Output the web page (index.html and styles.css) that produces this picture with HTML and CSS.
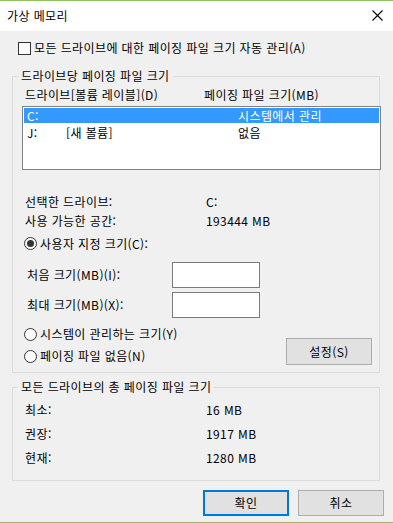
FILE: index.html
```html
<!DOCTYPE html>
<html lang="ko">
<head>
<meta charset="utf-8">
<title>가상 메모리</title>
<link rel="stylesheet" href="styles.css">
</head>
<body>
<div class="window">
  <div class="titlebar">
    <span class="title">가상 메모리</span>
    <svg class="close" width="11" height="11" viewBox="0 0 11 11"><path d="M0.5 0.5 L10.5 10.5 M10.5 0.5 L0.5 10.5" stroke="#000" stroke-width="1.1" fill="none"/></svg>
  </div>
  <div class="content">
    <div class="check-row">
      <span class="checkbox"></span>
      <span>모든 드라이브에 대한 페이징 파일 크기 자동 관리(A)</span>
    </div>

    <fieldset class="group group-drive">
      <legend>드라이브당 페이징 파일 크기</legend>
      <div class="list-head">
        <span class="col-drive">드라이브[볼륨 레이블](D)</span>
        <span class="col-size">페이징 파일 크기(MB)</span>
      </div>
      <div class="listbox">
        <div class="list-row selected">
          <span class="c1">C:</span><span class="c2"></span><span class="c3">시스템에서 관리</span>
        </div>
        <div class="list-row">
          <span class="c1">J:</span><span class="c2">[새 볼륨]</span><span class="c3">없음</span>
        </div>
      </div>

      <div class="info">
        <span>선택한 드라이브:</span><span>C:</span>
        <span>사용 가능한 공간:</span><span>193444 MB</span>
      </div>

      <div class="radio-row first">
        <span class="radio checked"></span><span>사용자 지정 크기(C):</span>
      </div>

      <div class="size-row first">
        <span class="size-label">처음 크기(MB)(I):</span>
        <span class="textbox"></span>
      </div>
      <div class="size-row">
        <span class="size-label">최대 크기(MB)(X):</span>
        <span class="textbox"></span>
      </div>

      <div class="bottom-row">
        <div class="radios">
          <div class="radio-row"><span class="radio"></span><span>시스템이 관리하는 크기(Y)</span></div>
          <div class="radio-row"><span class="radio"></span><span>페이징 파일 없음(N)</span></div>
        </div>
        <span class="btn set-btn">설정(S)</span>
      </div>
    </fieldset>

    <fieldset class="group group-total">
      <legend>모든 드라이브의 총 페이징 파일 크기</legend>
      <div class="totals">
        <span>최소:</span><span>16 MB</span>
        <span>권장:</span><span>1917 MB</span>
        <span>현재:</span><span>1280 MB</span>
      </div>
    </fieldset>

    <div class="actions">
      <span class="btn ok">확인</span>
      <span class="btn">취소</span>
    </div>
  </div>
</div>
</body>
</html>
```

FILE: styles.css
```css
* { box-sizing: border-box; }

html, body {
  margin: 0;
  padding: 0;
}

body {
  width: 393px;
  height: 523px;
  overflow: hidden;
  font-family: "Noto Sans CJK KR", "Noto Sans", sans-serif;
  font-size: 12px;
  line-height: 16px;
  letter-spacing: 0.4px;
  color: #000;
  background: #f0f0f0;
}

.window {
  height: 523px;
  display: flex;
  flex-direction: column;
  border-top: 1px solid #8dc55a;
  border-bottom: 1px solid #8dc55a;
}

.titlebar {
  height: 30px;
  flex: none;
  background: #fff;
  display: flex;
  align-items: center;
  justify-content: space-between;
  padding: 0 10px 0 7px;
}

.title {
  color: #000;
}

.close {
  display: block;
  margin-top: -1px;
}

.content {
  flex: 1;
  background: #f0f0f0;
  padding-top: 9px;
}

.check-row {
  display: flex;
  align-items: center;
  padding-left: 18px;
  height: 16px;
  gap: 3px;
}

.checkbox {
  width: 13px;
  height: 13px;
  border: 1px solid #333;
  background: #fff;
  flex: none;
}

.group {
  margin: 12px 0 0 12px;
  width: 368px;
  border: 1px solid #dcdcdc;
  padding: 3px 0 0 9px;
  min-width: 0;
}

.group legend {
  padding: 0 3px;
  margin-left: -4px;
  line-height: 16px;
}

.list-head {
  display: flex;
  height: 16px;
  padding-left: 3px;
}

.col-drive {
  width: 179px;
}

.listbox {
  margin-top: 3px;
  width: 359px;
  height: 64px;
  border: 1px solid #828282;
  background: #fff;
  padding: 1px;
}

.list-row {
  display: grid;
  grid-template-columns: 39px 172px 1fr;
  height: 16px;
  padding-left: 3px;
  align-items: center;
  line-height: 15px;
}

.list-row.selected {
  background: #3399ff;
  color: #fff;
  height: 15px;
  margin-bottom: 1px;
}

.info {
  margin-top: 22px;
  display: grid;
  grid-template-columns: 181px 1fr;
  grid-auto-rows: 19px;
  align-items: center;
  padding-left: 3px;
}

.radio-row {
  display: flex;
  align-items: center;
  gap: 3px;
  height: 19px;
  padding-left: 2px;
}

.radio-row.first {
  margin-top: 4px;
}

.radio {
  width: 13px;
  height: 13px;
  border: 1px solid #333;
  border-radius: 50%;
  background: #fff;
  flex: none;
  display: flex;
  align-items: center;
  justify-content: center;
}

.radio.checked::after {
  content: "";
  width: 7px;
  height: 7px;
  border-radius: 50%;
  background: #333;
}

.size-row {
  display: flex;
  align-items: center;
  height: 26px;
  margin-top: 4px;
  padding-left: 5px;
}

.size-row.first {
  margin-top: 9px;
}

.size-label {
  width: 145px;
}

.textbox {
  width: 88px;
  height: 26px;
  border: 1px solid #7a7a7a;
  background: #fff;
}

.bottom-row {
  display: flex;
  justify-content: space-between;
  align-items: flex-end;
  padding: 5px 7px 5px 0;
}

.radios .radio-row {
  height: 22px;
}

.btn {
  display: flex;
  align-items: center;
  justify-content: center;
  width: 86px;
  height: 26px;
  background: #e1e1e1;
  border: 1px solid #adadad;
}

.set-btn {
  height: 27px;
  margin-bottom: 2px;
}

.group-total {
  margin-top: 6px;
  padding: 3px 0 10px 9px;
}

.totals {
  display: grid;
  grid-template-columns: 181px 1fr;
  grid-auto-rows: 24px;
  align-items: center;
  padding-left: 3px;
}

.actions {
  display: flex;
  justify-content: flex-end;
  gap: 9px;
  margin-top: 9px;
  padding-right: 9px;
}

.btn.ok {
  border: 2px solid #0078d7;
}
```
